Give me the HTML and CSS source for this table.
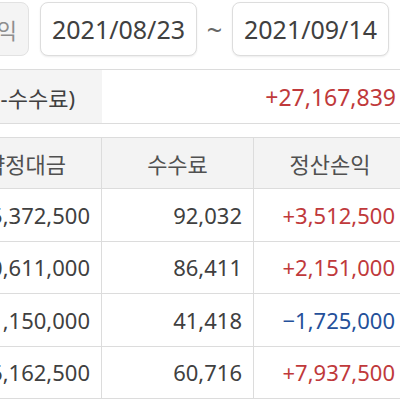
FILE: index.html
```html
<!DOCTYPE html>
<html lang="ko">
<head>
<meta charset="utf-8">
<link rel="stylesheet" href="styles.css">
</head>
<body>
<div class="page">
  <div class="topbar">
    <div class="tab-btn">정산손익</div>
    <div class="date-box">2021/08/23</div>
    <div class="tilde">~</div>
    <div class="date-box">2021/09/14</div>
  </div>
  <div class="summary">
    <div class="summary-label">정산손익(매매손익-수수료)</div>
    <div class="summary-value plus">+27,167,839</div>
  </div>
  <div class="table">
    <div class="row head">
      <div class="cell">약정대금</div>
      <div class="cell">수수료</div>
      <div class="cell">정산손익</div>
    </div>
    <div class="row">
      <div class="cell num">45,372,500</div>
      <div class="cell num">92,032</div>
      <div class="cell num plus">+3,512,500</div>
    </div>
    <div class="row">
      <div class="cell num">30,611,000</div>
      <div class="cell num">86,411</div>
      <div class="cell num plus">+2,151,000</div>
    </div>
    <div class="row">
      <div class="cell num">21,150,000</div>
      <div class="cell num">41,418</div>
      <div class="cell num minus">&minus;1,725,000</div>
    </div>
    <div class="row">
      <div class="cell num">36,162,500</div>
      <div class="cell num">60,716</div>
      <div class="cell num plus">+7,937,500</div>
    </div>
  </div>
</div>
</body>
</html>
```

FILE: styles.css
```css
html, body {
  margin: 0;
  padding: 0;
  background: #ffffff;
  overflow: hidden;
  width: 400px;
  height: 400px;
}
body {
  font-family: "Noto Sans", "Noto Sans CJK KR", sans-serif;
  color: #404040;
}
.page {
  margin-left: -50px;
  width: 456px;
}
.topbar {
  display: flex;
  align-items: center;
  padding-top: 2px;
  height: 54px;
  margin-bottom: 13px;
  padding-right: 16px;
}
.tab-btn {
  box-sizing: border-box;
  width: 79px;
  height: 54px;
  background: #f4f4f4;
  border: 1px solid #e2e2e2;
  border-radius: 8px;
  color: #8e8e8e;
  font-size: 22px;
  display: flex;
  align-items: center;
  justify-content: flex-end;
  padding-right: 11px;
  overflow: hidden;
  white-space: nowrap;
  margin-right: 11px;
}
.date-box {
  box-sizing: border-box;
  height: 54px;
  flex: 0 0 157px;
  border: 1px solid #dddddd;
  border-radius: 8px;
  background: #ffffff;
  box-shadow: 0 1px 2px rgba(0,0,0,0.08);
  font-size: 25px;
  color: #404040;
  display: flex;
  align-items: center;
  justify-content: center;
}
.tilde {
  flex: 0 0 35px;
  text-align: center;
  font-size: 27px;
  color: #666;
  line-height: 1;
}
.summary {
  display: flex;
  height: 53px;
  border-top: 1px solid #dcdcdc;
  border-bottom: 1px solid #dcdcdc;
}
.summary-label {
  width: 152px;
  background: #f4f4f4;
  font-size: 22px;
  display: flex;
  align-items: center;
  justify-content: flex-end;
  padding-right: 27px;
  box-sizing: border-box;
  white-space: nowrap;
  overflow: hidden;
  color: #404040;
}
.summary-value {
  flex: 1;
  display: flex;
  align-items: center;
  justify-content: flex-end;
  padding-right: 10px;
  font-size: 23px;
}
.plus { color: #c0393b; }
.minus { color: #24509a; }
.table {
  margin-top: 13px;
  border-top: 1px solid #dcdcdc;
}
.row {
  display: grid;
  grid-template-columns: 152px 152px 152px;
  height: 52.5px;
  border-bottom: 1px solid #dcdcdc;
  box-sizing: border-box;
}
.row.head {
  height: 51px;
  background: #f3f3f3;
}
.cell {
  display: flex;
  align-items: center;
  justify-content: center;
  font-size: 22px;
  border-right: 1px solid #dcdcdc;
  white-space: nowrap;
}
.cell:last-child { border-right: none; }
.head .cell { color: #505050; }
.cell.num {
  justify-content: flex-end;
  padding-right: 11px;
}
```
